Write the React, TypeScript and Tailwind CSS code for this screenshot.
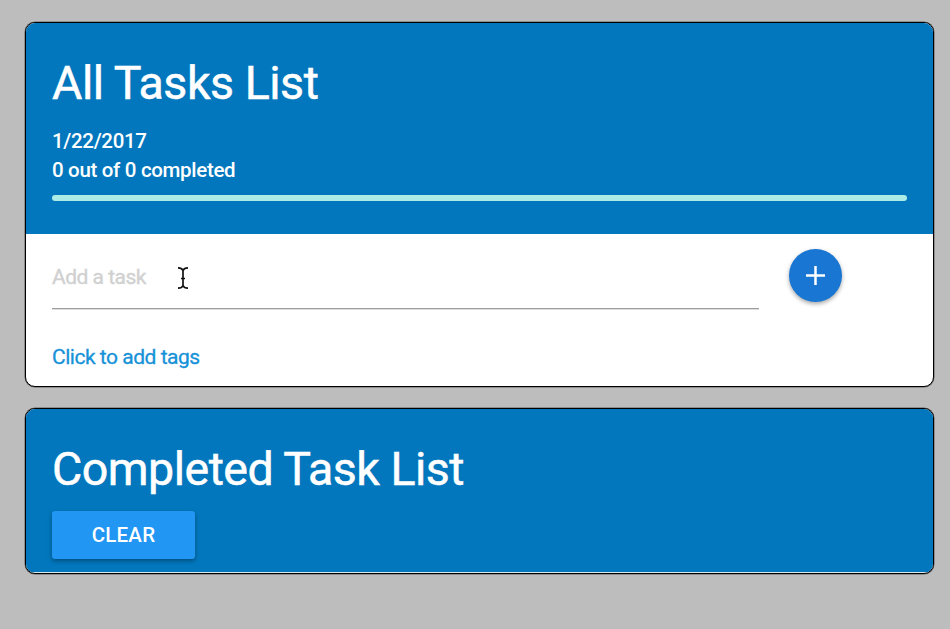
function TextCursor() {
  return (
    <svg className="absolute left-[151px] top-[32px] h-6 w-3" viewBox="0 0 12 24" fill="none" stroke="#111" strokeWidth="1.7">
      <path d="M1 1.800c2.600 0 4.200.8 5 2.700c.8-1.900 2.400-2.700 5-2.700M1 22.200c2.600 0 4.200-.8 5-2.700c.8 1.900 2.400 2.700 5 2.700M6 4v16M4 12.500h4" />
    </svg>
  );
}

export default function App() {
  return (
    <main className="flex h-[629px] w-[950px] flex-col gap-[21px] overflow-hidden bg-[#bdbdbd] pl-[25px] pt-[22px] font-['Roboto',sans-serif] text-[20px] text-white">
      <section className="h-[365px] w-[909px] overflow-hidden rounded-[10px] border border-black bg-white shadow-[0_0_0_0.5px_rgba(0,0,0,0.5)]">
        <header className="h-[211px] bg-[#0277bd] px-[26px] pt-[32px]">
          <h1 className="h-[56px] whitespace-nowrap text-[46.500px] leading-[56px] tracking-[-0.450px] [-webkit-text-stroke:0.5px_white]">All Tasks List</h1>
          <div className="mt-[16px] whitespace-nowrap text-[20.500px] font-medium leading-[29px] tracking-[-0.320px]">
            <p>1/22/2017</p>
            <p>0 out of 0 completed</p>
          </div>
          <div className="mt-[10px] h-[6px] w-[855px] rounded-[3px] bg-[#acece6]" />
        </header>
        <div className="relative px-[26px]">
          <div className="flex">
            <div className="h-[75px] w-[707px] border-b border-[#9e9e9e] shadow-[0_0.5px_0_rgba(120,120,120,0.5)]">
              <input className="h-[60px] w-full pt-[26px] text-[21px] tracking-[-0.500px] outline-none placeholder:text-[#d1d1d1] placeholder:opacity-100 placeholder:[-webkit-text-stroke:0.4px_#d1d1d1]" placeholder="Add a task" />
            </div>
            <button className="ml-[29.500px] mt-[14.500px] flex h-[53px] w-[53px] items-center justify-center rounded-full bg-[#1976d2] shadow-[0_2px_4px_rgba(0,0,0,0.35)]" aria-label="Add task">
              <svg className="h-[19px] w-[19px]" viewBox="0 0 19 19" fill="none" stroke="white" strokeWidth="2.500">
                <path d="M9.500 0v19M0 9.500h19" />
              </svg>
            </button>
          </div>
          <TextCursor />
          <button className="mt-[33px] block whitespace-nowrap text-[21px] leading-[30px] tracking-[-0.480px] text-[#1792d8] [-webkit-text-stroke:0.3px_#1792d8]">Click to add tags</button>
        </div>
      </section>
      <section className="h-[166px] w-[909px] overflow-hidden rounded-[10px] border border-black bg-[#d8e9f2] shadow-[0_0_0_0.5px_rgba(0,0,0,0.5)]">
        <header className="h-[163px] bg-[#0277bd] px-[26px] pt-[32px]">
          <h1 className="h-[56px] whitespace-nowrap text-[46.500px] leading-[56px] tracking-[-0.500px] [-webkit-text-stroke:0.5px_white]">Completed Task List</h1>
          <button className="mt-[14px] flex h-[48px] w-[143px] items-center justify-center rounded-[3px] bg-[#2196f3] text-[20.500px] font-medium tracking-[0.200px] shadow-[0_2px_4px_rgba(0,0,0,0.35)]">CLEAR</button>
        </header>
      </section>
    </main>
  );
}
